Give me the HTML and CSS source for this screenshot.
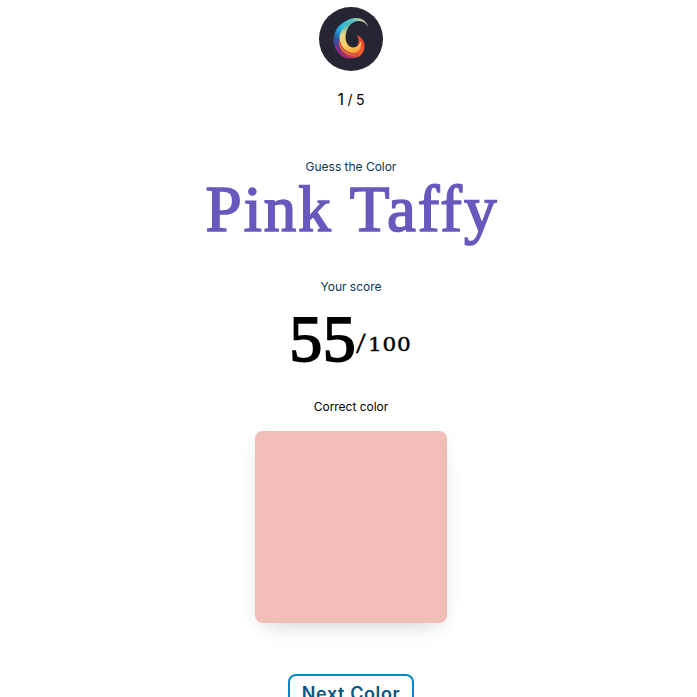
FILE: index.html
```html
<!DOCTYPE html>
<html lang="en">
<head>
  <meta charset="UTF-8">
  <meta name="viewport" content="width=device-width, initial-scale=1.0">
  <title>Guess the Color</title>
  <link rel="stylesheet" href="styles.css">
</head>
<body>
  <main class="game">
    <svg class="logo" viewBox="0 0 64 64" aria-hidden="true">
      <defs>
        <linearGradient id="outer" x1="0.9" y1="0" x2="0.3" y2="1">
          <stop offset="0" stop-color="#f4d58a"/>
          <stop offset="0.2" stop-color="#55c5c4"/>
          <stop offset="0.5" stop-color="#20b5df"/>
          <stop offset="0.75" stop-color="#2555a5"/>
          <stop offset="1" stop-color="#7c2788"/>
        </linearGradient>
        <linearGradient id="middle" x1="0.4" y1="0" x2="0.6" y2="1">
          <stop offset="0" stop-color="#35aebb"/>
          <stop offset="0.35" stop-color="#e8d58a"/>
          <stop offset="0.7" stop-color="#fcd05c"/>
          <stop offset="1" stop-color="#f9a33c"/>
        </linearGradient>
        <linearGradient id="inner" x1="0.9" y1="0" x2="0.1" y2="0.8">
          <stop offset="0" stop-color="#ed3e2d"/>
          <stop offset="0.5" stop-color="#f8602f"/>
          <stop offset="1" stop-color="#a32a62"/>
        </linearGradient>
      </defs>
      <circle cx="32" cy="32" r="32" fill="#262533"/>
      <path d="M49 20C47 10 35 9 27 14C16 19 12 31 16 41C20 49 29 53 37 50C30 48 24 42 24 34C24 22 32 14 40 14C44 14 47 16 49 20Z" fill="url(#outer)"/>
      <path d="M38 28C47 32 48 43 41 49C35 53 27 51 23 46C20 42 19 36 20 31C21 37 25 42 31 43C38 44 42 36 38 28Z" fill="url(#inner)"/>
      <path d="M34 15C25 18 19 25 21 34C23 42 29 46 34 46C40 46 43 40 42 34C40 40 34 42 30 39C24 34 26 21 34 15Z" fill="url(#middle)"/>
      <path d="M20 34C21 42 28 48 37 48C30 50 20 45 20 34Z" fill="#ee8932"/>
      <path d="M17 38C19 46 26 51 34 51C26 53 18 48 17 38Z" fill="#b32a74"/>
    </svg>

    <div class="round"><span class="round-current">1</span> / 5</div>

    <p class="label">Guess the Color</p>
    <h1 class="color-name">Pink Taffy</h1>

    <p class="label score-label">Your score</p>
    <div class="score">55<span class="slash">/</span><span class="score-max">100</span></div>

    <p class="label correct-label">Correct color</p>
    <div class="swatch"></div>

    <button class="next">Next Color</button>
  </main>
</body>
</html>
```

FILE: styles.css
```css
:root {
  --font-base: Inter, sans-serif;
  --font-heading: "Liberation Serif", serif;
}

body {
  margin: 0;
  height: 697px;
  overflow: hidden;
  background: #fff;
  color: #000;
  font-family: var(--font-base);
}

.game {
  display: flex;
  flex-direction: column;
  align-items: center;
  padding: 7px 0 0 5px;
}

.logo {
  width: 64px;
  height: 64px;
}

.round {
  height: 24px;
  margin-top: 16px;
  font-size: 14px;
  line-height: 24px;
  word-spacing: -0.4px;
}

.round-current {
  font-size: 16px;
}

.label {
  height: 16px;
  margin: 48px 0 0;
  color: #0b3558;
  font-size: 12px;
  line-height: 16px;
  letter-spacing: -0.02px;
}

.color-name {
  height: 72px;
  margin: 0;
  color: #6958bd;
  font-family: var(--font-heading);
  font-size: 65px;
  font-weight: 400;
  line-height: 68px;
  letter-spacing: 2px;
  text-indent: 2px;
  white-space: nowrap;
  font-variant-ligatures: none;
  -webkit-text-stroke: 1.7px #6958bd;
}

.score-label {
  margin-top: 32px;
}

.score {
  display: flex;
  align-items: flex-start;
  height: 72px;
  margin-top: 8px;
  font-family: var(--font-heading);
  font-size: 66px;
  line-height: 72px;
  letter-spacing: 0.6px;
  -webkit-text-stroke: 1.8px #000;
}

.slash {
  margin-left: 1px;
  font-family: "Liberation Sans", sans-serif;
  font-size: 27px;
  transform: skewX(-8deg);
  line-height: 82px;
  -webkit-text-stroke: 0;
}

/* small wide figures */
.score-max {
  margin: 0 9px 0 2px;
  font-family: "DejaVu Serif", serif;
  font-size: 18px;
  line-height: 83px;
  letter-spacing: 0.6px;
  transform: scaleX(1.2);
  transform-origin: left;
  -webkit-text-stroke: 0.4px #000;
}

.correct-label {
  margin-top: 24px;
  color: #000;
}

.swatch {
  width: 192px;
  height: 192px;
  margin-top: 16px;
  border-radius: 8px;
  background: #f0bdb7;
  box-shadow: 0 12px 24px -12px rgba(0, 0, 0, 0.14), 0 4px 16px rgba(0, 0, 0, 0.05);
}

.next {
  flex: none;
  box-sizing: border-box;
  width: 126px;
  height: 40px;
  margin-top: 51px;
  padding: 0;
  border: 2px solid #0588c8;
  border-radius: 8px;
  background: #fff;
  color: #07557f;
  font-family: var(--font-base);
  font-size: 18px;
  font-weight: 600;
  line-height: 36px;
  letter-spacing: 0.6px;
  white-space: nowrap;
}
```
